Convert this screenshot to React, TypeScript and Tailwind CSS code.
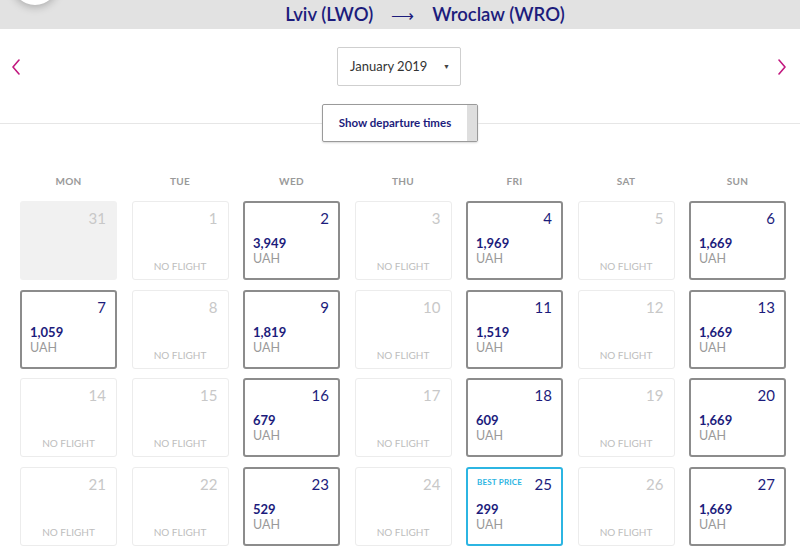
import React from 'react';

type Day = { d: number; price?: string; muted?: boolean; best?: boolean };

const days: Day[] = [
  { d: 31, muted: true },
  { d: 1 },
  { d: 2, price: '3,949' },
  { d: 3 },
  { d: 4, price: '1,969' },
  { d: 5 },
  { d: 6, price: '1,669' },
  { d: 7, price: '1,059' },
  { d: 8 },
  { d: 9, price: '1,819' },
  { d: 10 },
  { d: 11, price: '1,519' },
  { d: 12 },
  { d: 13, price: '1,669' },
  { d: 14 },
  { d: 15 },
  { d: 16, price: '679' },
  { d: 17 },
  { d: 18, price: '609' },
  { d: 19 },
  { d: 20, price: '1,669' },
  { d: 21 },
  { d: 22 },
  { d: 23, price: '529' },
  { d: 24 },
  { d: 25, price: '299', best: true },
  { d: 26 },
  { d: 27, price: '1,669' },
];

const weekdays = ['MON', 'TUE', 'WED', 'THU', 'FRI', 'SAT', 'SUN'];

const Chevron: React.FC<{ dir: 'left' | 'right' }> = ({ dir }) => (
  <svg width="10" height="16" viewBox="0 0 10 16" fill="none">
    <path
      d={dir === 'left' ? 'M8 1 L2 8 L8 15' : 'M2 1 L8 8 L2 15'}
      stroke="#c2187f"
      strokeWidth="1.6"
      strokeLinecap="round"
      strokeLinejoin="round"
    />
  </svg>
);

const DayCell: React.FC<{ day: Day }> = ({ day }) => {
  if (day.muted) {
    return (
      <div className="h-[79px] rounded-[3px] bg-[#f1f1f1] px-[11px] pt-[8px]">
        <div className="text-right text-[15px] leading-[18px] text-[#c8c8c8]">{day.d}</div>
      </div>
    );
  }

  if (!day.price) {
    return (
      <div className="h-[79px] rounded-[3px] border border-[#ececec] bg-white flex flex-col px-[10px] pt-[7px]">
        <div className="text-right text-[15px] leading-[18px] text-[#c8c8c8]">{day.d}</div>
        <div className="mt-auto pb-[7px] text-center text-[10px] leading-[12px] text-[#bdbdbd]">NO FLIGHT</div>
      </div>
    );
  }

  return (
    <div
      className={`h-[79px] rounded-[3px] border-2 bg-white flex flex-col pl-[8px] pr-[9px] pt-[6px] ${
        day.best ? 'border-[#2cb5e2]' : 'border-[#8c8c8c]'
      }`}
    >
      <div className="flex items-center justify-between leading-[18px]">
        <span className="text-[8px] font-bold tracking-[0.2px] text-[#2cb5e2] -mt-[4px] ml-[1px]">
          {day.best ? 'BEST PRICE' : ''}
        </span>
        <span className="text-[15px] text-[#1c1c7c]">{day.d}</span>
      </div>
      <div className="mt-[9px] text-[13px] font-bold leading-[14px] text-[#1c1c7c]">{day.price}</div>
      <div className="text-[12.5px] leading-[18px] text-[#9a9a9a]">UAH</div>
    </div>
  );
};

export default function App() {
  return (
    <div className="relative w-[800px] h-[552px] overflow-hidden bg-white font-['Lato','Open_Sans',sans-serif]">
      {/* header */}
      <div className="h-[29px] bg-[#e2e2e2] flex justify-center">
        <div className="flex items-center gap-[12px] text-[18.5px] leading-[17px] font-semibold text-[#1c1c7c] ml-[50px]">
          <span>Lviv (LWO)</span>
          <span className="text-[16px] font-normal mx-[6px]">⟶</span>
          <span>Wroclaw (WRO)</span>
        </div>
      </div>
      <div className="absolute left-[12px] top-[-41px] w-[46px] h-[46px] rounded-full bg-white shadow-[0_2px_8px_rgba(0,0,0,0.25)]" />

      {/* month selector */}
      <div className="flex items-center justify-between pl-[11px] pr-[13px] mt-[18px]">
        <Chevron dir="left" />
        <div className="w-[124px] h-[39px] rounded-[2px] border border-[#cfcfcf] flex items-center justify-between pl-[12px] pr-[10px] text-[13px] text-[#333]">
          <span>January 2019</span>
          <span className="text-[7px] text-[#444]">▼</span>
        </div>
        <Chevron dir="right" />
      </div>

      {/* departure times toggle */}
      <div className="flex items-center mt-[18px]">
        <div className="flex-1 h-px bg-[#e6e6e6]" />
        <div className="w-[156px] h-[38px] flex border border-[#9a9a9a] rounded-[2px] bg-white shadow-[0_1px_2px_rgba(0,0,0,0.15)]">
          <div className="flex-1 flex items-center justify-center text-[11.5px] font-bold text-[#1c1c7c]">
            Show departure times
          </div>
          <div className="w-[10px] bg-[#dedede]" />
        </div>
        <div className="flex-1 h-px bg-[#e6e6e6]" />
      </div>

      {/* calendar */}
      <div className="pl-[20px] pr-[14px] mt-[33px]">
        <div className="grid grid-cols-7 gap-x-[14.5px]">
          {weekdays.map((w) => (
            <div key={w} className="text-center text-[10px] font-bold leading-[12px] tracking-[0.3px] text-[#9a9a9a]">
              {w}
            </div>
          ))}
        </div>
        <div className="grid grid-cols-7 gap-x-[14.5px] gap-y-[9.5px] mt-[14px]">
          {days.map((day) => (
            <DayCell key={`${day.d}-${day.muted ? 'm' : ''}`} day={day} />
          ))}
        </div>
      </div>
    </div>
  );
}
